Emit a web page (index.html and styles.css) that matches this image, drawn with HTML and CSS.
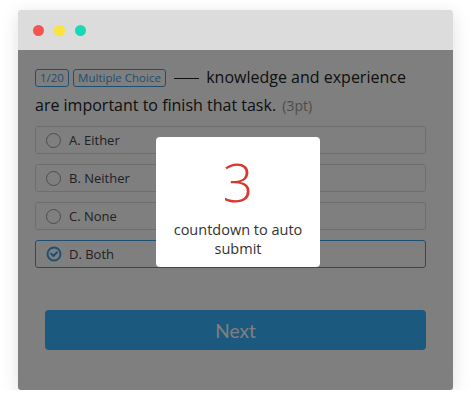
FILE: index.html
```html
<!DOCTYPE html>
<html lang="en">
<head>
    <meta charset="UTF-8">
    <meta name="viewport" content="width=device-width, initial-scale=1.0">
    <title>Quiz</title>
    <link rel="stylesheet" href="styles.css">
</head>
<body>
    <div class="window">
        <div class="titlebar">
            <span class="dot red"></span>
            <span class="dot yellow"></span>
            <span class="dot green"></span>
        </div>
        <div class="content">
            <div class="question">
                <span class="tag">1/20</span>
                <span class="tag">Multiple Choice</span>
                <span class="blank"></span>
                <span class="stem">knowledge and experience are important to finish that task.</span>
                <span class="score">(3pt)</span>
            </div>
            <div class="options">
                <div class="option"><span class="radio"></span>A. Either</div>
                <div class="option"><span class="radio"></span>B. Neither</div>
                <div class="option"><span class="radio"></span>C. None</div>
                <div class="option checked">
                    <svg class="check" width="16" height="16" viewBox="0 0 16 16">
                        <circle cx="8" cy="8" r="6.5" fill="none" stroke="#3a9ee6" stroke-width="2"/>
                        <path d="M5 7.6 L7.4 10 L11 6.2" fill="none" stroke="#3a9ee6" stroke-width="2" stroke-linecap="round" stroke-linejoin="round"/>
                    </svg>
                    D. Both
                </div>
            </div>
            <button class="next">Next</button>

            <div class="mask"></div>
            <div class="dialog">
                <div class="count">3</div>
                <div class="hint">countdown to auto submit</div>
            </div>
        </div>
    </div>
</body>
</html>
```

FILE: styles.css
```css
body { margin: 0; background: #fff; font-family: "Open Sans", Arial, sans-serif; color: #333; }
.window {
    width: 435px;
    height: 380px;
    margin: 10px 0 0 18px;
    border-radius: 3px;
    overflow: hidden;
    box-shadow: 0 4px 18px rgba(0, 0, 0, 0.13);
    background: #fff;
}
.titlebar {
    height: 40px;
    background: #dcdcdc;
    display: flex;
    align-items: center;
    gap: 10px;
    padding-left: 15px;
    box-sizing: border-box;
}
.dot { width: 11px; height: 11px; border-radius: 50%; }
.red { background: #f5534f; }
.yellow { background: #f8e43a; }
.green { background: #14dbb5; }

.content {
    position: relative;
    height: 340px;
    padding: 13px 27px 0 17px;
    box-sizing: border-box;
}
.question { font-size: 16px; line-height: 28px; color: #222; }
.tag {
    display: inline-block;
    font-size: 11.5px;
    line-height: 16px;
    padding: 0 4px;
    border: 1px solid #3f9ee0;
    border-radius: 3px;
    color: #3f9ee0;
    vertical-align: 1px;
}
.blank {
    display: inline-block;
    width: 25px;
    border-bottom: 1px solid #222;
    margin: 0 3px 0 4px;
    vertical-align: 4px;
}
.score { font-size: 14px; color: #999; margin-left: 2px; }

.options { display: flex; flex-direction: column; gap: 10px; margin-top: 6px; }
.option {
    height: 28px;
    border: 1px solid #ddd;
    border-radius: 3px;
    display: flex;
    align-items: center;
    padding-left: 10px;
    font-size: 13px;
    color: #444;
    box-sizing: border-box;
}
.radio {
    width: 13px;
    height: 13px;
    border: 1px solid #999;
    border-radius: 50%;
    margin-right: 8px;
}
.option.checked { border-color: #3a9ee6; }
.check { margin-right: 7px; }

.next {
    display: block;
    width: 381px;
    height: 40px;
    margin: 42px 0 0 10px;
    border: none;
    border-radius: 4px;
    background: #37b2fe;
    color: #fff;
    font-family: Lato, "Open Sans", sans-serif;
    font-size: 19px;
}

.mask { position: absolute; inset: 0; background: rgba(0, 0, 0, 0.5); }
.dialog {
    position: absolute;
    left: 138px;
    top: 87px;
    width: 164px;
    height: 130px;
    background: #fff;
    border-radius: 4px;
    text-align: center;
    box-sizing: border-box;
    padding-top: 10px;
}
.count { font-size: 54px; font-weight: 300; line-height: 68px; color: #d9382e; }
.hint { font-size: 14.5px; line-height: 19px; color: #333; padding: 0 8px; margin-top: 5px; }
```
